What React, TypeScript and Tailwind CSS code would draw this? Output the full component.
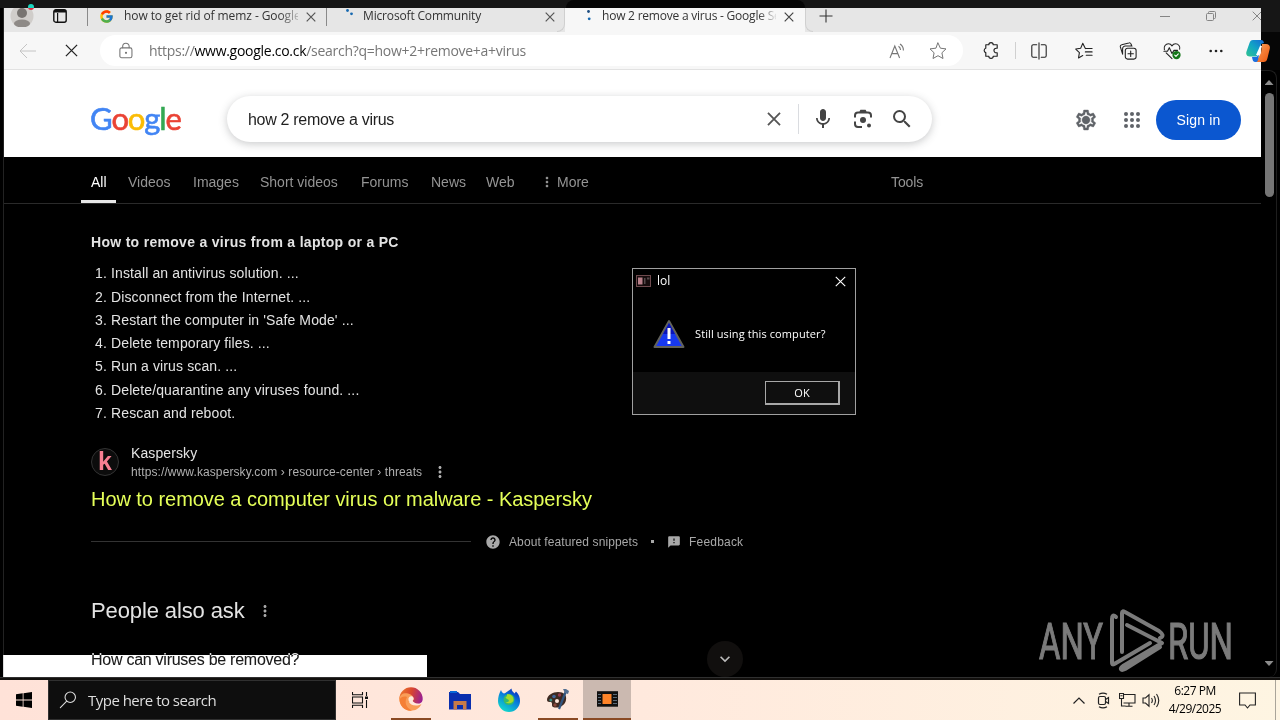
import type { ReactNode } from "react";
import { FcGoogle } from "react-icons/fc";
import { MdMic, MdSearch, MdOutlineSettings, MdHelp, MdFeedback, MdMoreVert, MdExpandMore } from "react-icons/md";

const SEGOE = "font-['Open_Sans','Noto_Sans',sans-serif]";

const NAV = [
  { label: "All", width: "w-[15px]", gap: "mr-[22px]" },
  { label: "Videos", width: "w-[43px]", gap: "mr-[22px]" },
  { label: "Images", width: "w-[45px]", gap: "mr-[22px]" },
  { label: "Short videos", width: "w-[79px]", gap: "mr-[22px]" },
  { label: "Forums", width: "w-[48px]", gap: "mr-[22px]" },
  { label: "News", width: "w-[33px]", gap: "mr-[22px]" },
  { label: "Web", width: "w-[29px]", gap: "mr-[24px]" },
];

const STEPS = [
  "Install an antivirus solution. ...",
  "Disconnect from the Internet. ...",
  "Restart the computer in 'Safe Mode' ...",
  "Delete temporary files. ...",
  "Run a virus scan. ...",
  "Delete/quarantine any viruses found. ...",
  "Rescan and reboot.",
];

function Line({ size = 20, className = "", children }: { size?: number; className?: string; children: ReactNode }) {
  return (
    <svg
      width={size}
      height={size}
      viewBox="0 0 20 20"
      fill="none"
      stroke="currentColor"
      strokeWidth="1.2"
      strokeLinecap="round"
      strokeLinejoin="round"
      className={`shrink-0 ${className}`}
    >
      {children}
    </svg>
  );
}

function Cross({ size = 10, className = "", width = 1.2 }: { size?: number; className?: string; width?: number }) {
  return (
    <svg width={size} height={size} viewBox="0 0 10 10" className={`shrink-0 ${className}`}>
      <path d="M.7.7l8.6 8.6M9.3.7L.7 9.3" stroke="currentColor" strokeWidth={width} />
    </svg>
  );
}

function TabStrip() {
  return (
    <div className={`flex h-6 bg-[#e6e6e6] text-[12px] leading-4 text-[#333] ${SEGOE}`}>
      <div className="relative ml-[6px] h-[19px] w-6 overflow-hidden">
        <svg width="24" height="24" viewBox="0 0 24 24" className="-mt-1">
          <circle cx="12" cy="12" r="11.5" fill="#d0cdca" />
          <circle cx="12" cy="9" r="5" fill="#787471" />
          <ellipse cx="12" cy="19.5" rx="8" ry="4" fill="#8e8a87" />
        </svg>
      </div>
      <svg width="14" height="14" viewBox="0 0 14 14" className="mt-[1px] ml-[19px]">
        <rect x=".8" y=".8" width="12.4" height="12.4" rx="2" fill="none" stroke="#111" strokeWidth="1.4" />
        <path d="M1 1h12v2.600H1zM4 4h1.200v9H4z" fill="#111" />
      </svg>
      <div className="ml-5 h-[18px] w-px bg-[#8a8a8a]" />
      <FcGoogle size={15} className="mt-px ml-[11px]" />
      <div className="ml-[10px] w-[174px] whitespace-nowrap tracking-[-0.08px] [mask-image:linear-gradient(90deg,#000_155px,transparent_180px)]">
        how to get rid of memz - Google
      </div>
      <Cross className="mt-[4px] ml-[8px] text-[#555]" />
      <div className="ml-[10px] h-[18px] w-px bg-[#8a8a8a]" />
      <svg width="12" height="12" viewBox="0 0 12 12" className="ml-[17px]">
        <circle cx="3.5" cy="2.5" r="1.4" fill="#1769b0" />
        <circle cx="7.5" cy="5.8" r="1.4" fill="#1769b0" />
      </svg>
      <div className="ml-[7px] w-[182px] whitespace-nowrap tracking-[-0.16px]">Microsoft Community</div>
      <Cross className="mt-[4px] text-[#555]" />
      <div className="ml-[10px] h-6 w-[240px] bg-[#f7f7f7]">
        <div className="flex h-6">
          <div className="-ml-2 h-6 w-2 rounded-br-lg border-r border-b border-[#d0d0d0] bg-[#e6e6e6]" />
          <svg width="10" height="14" viewBox="0 0 10 14" className="ml-[19px]">
            <circle cx="4.5" cy="3.5" r="1.4" fill="#1d4d80" />
            <circle cx="5.2" cy="10.8" r="1.4" fill="#1769b0" />
          </svg>
          <div className="ml-[8px] w-[174px] whitespace-nowrap tracking-[-0.22px] [mask-image:linear-gradient(90deg,#000_156px,transparent_176px)]">
            how 2 remove a virus - Google Se
          </div>
          <Cross className="mt-[4px] ml-[8px] text-[#444]" />
        </div>
      </div>
      <div className="h-6 w-2 rounded-bl-lg border-b border-l border-[#d0d0d0] bg-[#e6e6e6]" />
      <svg width="14" height="14" viewBox="0 0 14 14" className="mt-px ml-[6px]">
        <path d="M7 .5v13M.5 7h13" stroke="#333" strokeWidth="1.1" />
      </svg>
      <div className="ml-auto flex items-start text-[#858585]">
        <div className="mt-[8px] mr-9 h-px w-[10px] bg-[#858585]" />
        <svg width="10" height="10" viewBox="0 0 10 10" className="mt-[3px]" fill="none" stroke="currentColor">
          <rect x=".5" y="2.5" width="7" height="7" rx="1" />
          <path d="M2.5 2.3V1.5a1 1 0 0 1 1-1h5a1 1 0 0 1 1 1v5a1 1 0 0 1-1 1h-.8" />
        </svg>
        <Cross className="mt-[3px] -mr-px ml-[36px]" width={1} />
      </div>
    </div>
  );
}

function Toolbar() {
  return (
    <div className="flex h-[38px] items-center border-b border-[#e2e2e2] bg-[#f7f7f7] text-[#222]">
      <svg width="18" height="16" viewBox="0 0 18 16" className="ml-[15px]" fill="none" stroke="#c4c4c4">
        <path d="M17 8H1M8 1L1 8l7 7" />
      </svg>
      <Cross size={13} width={1} className="ml-[28px]" />
      <div className={`ml-[22px] flex h-[31px] w-[863px] items-center rounded-full bg-white text-[14px] text-[#767676] ${SEGOE}`}>
        <Line size={18} className="ml-[17px]">
          <rect x="3.2" y="6.5" width="13.4" height="11" rx="2" />
          <path d="M6.300 6.300V5a3.600 3.600 0 0 1 7.200 0v1.300" />
          <circle cx="10" cy="12" r=".6" fill="currentColor" />
        </Line>
        <div className="ml-[14px] w-[600px] whitespace-nowrap tracking-[-0.28px]">
          https://<span className="text-black">www.google.co.ck</span>/search?q=how+2+remove+a+virus
        </div>
        <svg width="18" height="16" viewBox="0 0 18 16" className="ml-auto" fill="none" stroke="currentColor" strokeWidth="1.1">
          <path d="M1 15L5.800 3l4.800 12M2.800 10.600h6M9.500 3.200a4.500 4.500 0 0 1 2 3.800M11 1a7.500 7.500 0 0 1 3.400 6.500" />
        </svg>
        <Line className="mr-[15px] ml-[21px]">
          <path d="M10 2l2.400 5.200 5.600.7-4.100 3.900 1.100 5.700L10 14.700l-5 2.800 1.100-5.700L2 7.900l5.600-.7z" strokeWidth="1" />
        </Line>
      </div>
      <Line size={19} className="ml-[19px]">
        <path d="M4 4h3.200a2.300 2.300 0 0 1 4.600 0H16v3.600h-1a2.400 2.400 0 0 0 0 4.800h1V16h-4.200a2.300 2.300 0 0 1-4.600 0H4v-3.800a2.400 2.400 0 0 1 0-4.600z" />
      </Line>
      <div className="ml-[14px] h-[17px] w-px bg-[#d0d0d0]" />
      <div className="flex">
        <div className="flex w-[45px] justify-center">
          <Line size={18}>
            <path d="M7.500 3H3.600A1.600 1.600 0 0 0 2 4.600v10.800A1.600 1.600 0 0 0 3.600 17h3.900M12.500 3h3.900A1.600 1.600 0 0 1 18 4.600v10.800a1.600 1.600 0 0 1-1.600 1.600h-3.900M10 1v18" />
          </Line>
        </div>
        <div className="flex w-[45px] justify-center">
          <Line size={18}>
            <path d="M11.500 7.300L8.600 1.500 6.300 7 .8 7.800l4.100 4-1 5.900 4.700-2.600M12 7.200h7M11.500 11h7.500M12.500 14.800H19" />
          </Line>
        </div>
        <div className="flex w-[44px] justify-center">
          <Line size={18}>
            <rect x="7" y="7" width="12" height="12" rx="2.500" />
            <path d="M13 10v6M10 13h6M4 13.500L1.500 5.500A2 2 0 0 1 3 3l8-2a2 2 0 0 1 2.500 1.500l.5 2M4 13V7.500A3 3 0 0 1 7 4.500h7.500" />
          </Line>
        </div>
        <div className="flex w-[44px] justify-center">
          <Line size={18}>
            <path d="M1.500 8.500C.5 5 3 2 6 2c2 0 3.200 1 4 2.300C10.800 3 12 2 14 2c3 0 5.500 3 4.500 6M3.500 12L10 18.500M1 10.300h4l2-4 3 6.500 2.200-3.500h4" />
            <circle cx="15" cy="14.500" r="4.600" fill="#15771a" stroke="none" />
            <path d="M13 14.600l1.400 1.300 2.600-2.700" stroke="#fff" />
          </Line>
        </div>
        <div className="flex w-[44px] justify-center">
          <svg width="14" height="18" viewBox="0 0 14 18" fill="#222">
            <circle cx="1.700" cy="9" r="1.300" />
            <circle cx="7" cy="9" r="1.300" />
            <circle cx="12.300" cy="9" r="1.300" />
          </svg>
        </div>
      </div>
    </div>
  );
}

function SearchHeader() {
  return (
    <div className="flex h-[87px] items-start bg-white">
      <div className="mt-[29px] ml-[86px] w-[91px] font-['Lato',sans-serif] text-[31px] leading-[38px] tracking-[-1.1px] whitespace-nowrap [-webkit-text-stroke:0.6px_currentColor]">
        <span className="text-[#4285f4]">G</span>
        <span className="text-[#ea4335]">o</span>
        <span className="text-[#fbbc05]">o</span>
        <span className="text-[#4285f4]">g</span>
        <span className="text-[#34a853]">l</span>
        <span className="text-[#ea4335]">e</span>
      </div>
      <div className="mt-[26px] ml-[46px] flex h-[46px] w-[705px] items-center rounded-full bg-white text-[#444] shadow-[0_2px_8px_rgba(60,64,67,0.28)]">
        <div className="mt-[2px] ml-[21px] w-[518px] text-[16px] tracking-[-0.3px] text-[#1f1f1f]">how 2 remove a virus</div>
        <Cross size={14} width={1.3} className="ml-px text-[#555]" />
        <div className="ml-[17px] h-[30px] w-px bg-[#dadce0]" />
        <MdMic size={24} className="ml-[12px]" />
        <svg width="20" height="20" viewBox="0 0 20 20" className="ml-[18px]" fill="none" stroke="#444" strokeWidth="2">
          <path d="M2 8.500V6.500a3 3 0 0 1 3-3h10a3 3 0 0 1 3 3v2M2 12.500v2.500a3 3 0 0 0 3 3h4M7 3.500l1-1.700h4l1 1.700" />
          <circle cx="10" cy="11" r="3" fill="#444" stroke="none" />
          <circle cx="16" cy="16.500" r="2" fill="#444" stroke="none" />
        </svg>
        <MdSearch size={24} className="ml-[17px]" />
      </div>
      <div className="relative mt-[38px] ml-[142px] h-6 w-6 text-[#5f6368]">
        <MdOutlineSettings size={24} className="[&>path:last-child]:stroke-current [&>path:last-child]:stroke-[0.4px]" />
        <div className="absolute top-[9px] left-[9px] h-[6px] w-[6px] rounded-full bg-[#5f6368]" />
      </div>
      <svg width="24" height="24" viewBox="0 0 24 24" fill="#5f6368" className="mt-[38px] ml-[22px]">
        {[6, 12, 18].map((y) => [6, 12, 18].map((x) => <circle key={`${x}-${y}`} cx={x} cy={y} r="2" />))}
      </svg>
      <button className="mt-[30px] ml-[12px] h-10 w-[85px] rounded-full bg-[#0b57d0] text-[14px] tracking-[0.2px] text-white">Sign in</button>
    </div>
  );
}

function Results() {
  return (
    <div className="flex flex-col text-[#e3e3e3]">
      <div className="flex h-[47px] items-start border-b border-[#2a2a2a] pt-4 pl-[87px] text-[14px] leading-[18px] text-[#949494]">
        {NAV.map((item, i) => (
          <div key={item.label} className={`relative whitespace-nowrap ${item.width} ${item.gap} ${i === 0 ? "text-white" : ""}`}>
            {item.label}
            {i === 0 && <div className="absolute top-[27px] -left-[10px] h-[3px] w-[35px] bg-[#e8e8e8]" />}
          </div>
        ))}
        <MdMoreVert size={16} className="mt-px" />
        <div className="ml-[2px] w-[334px]">More</div>
        <div className="tracking-[-0.1px]">Tools</div>
      </div>

      <div className="flex flex-col pl-[87px]">
        <h2 className="mt-[29px] text-[14px] leading-[18px] font-bold tracking-[0.3px]">How to remove a virus from a laptop or a PC</h2>
        <ol className="mt-[11.3px] text-[14px] leading-[23.3px] tracking-[0.12px]">
          {STEPS.map((step, i) => (
            <li key={step} className="flex">
              <span className="ml-[4px] w-4">{i + 1}.</span>
              {step}
            </li>
          ))}
        </ol>

        <div className="mt-[18.6px] flex">
          <div className="mt-[4px] flex h-7 w-7 items-center justify-center rounded-full border border-[#333] bg-[#0c0c0c] text-[25px] leading-none font-bold text-[#f77f92]">
            k
          </div>
          <div className="ml-3">
            <div className="text-[14px] leading-[18px] tracking-[0.1px]">Kaspersky</div>
            <div className="mt-px flex h-[18px] items-center text-[12px] text-[#b0b0b0]">
              <span className="w-[292px] whitespace-nowrap tracking-[0.1px]">https://www.kaspersky.com › resource-center › threats</span>
              <MdMoreVert size={18} className="ml-[8px]" />
            </div>
          </div>
        </div>
        <h3 className="mt-[5px] text-[20px] leading-[26px] tracking-[-0.05px] text-[#e5ff58]">How to remove a computer virus or malware - Kaspersky</h3>

        <div className="mt-[21px] flex h-[18px] items-center text-[12px] text-[#a8a8a8]">
          <div className="h-px w-[380px] bg-[#333]" />
          <MdHelp size={16} className="ml-[14px]" />
          <span className="ml-[8px] w-[130px] whitespace-nowrap tracking-[0.1px]">About featured snippets</span>
          <span className="ml-[12px] h-[3px] w-[3px] bg-[#a8a8a8]" />
          <MdFeedback size={14} className="ml-[13px]" />
          <span className="ml-[8px] tracking-[0.2px]">Feedback</span>
        </div>

        <div className="mt-[46px] flex items-center">
          <h2 className="text-[22px] leading-[28px] tracking-[-0.12px]">People also ask</h2>
          <MdMoreVert size={18} className="ml-[11px] text-[#a8a8a8]" />
        </div>
        <div className="mt-[16px] flex h-9 w-[652px] items-center">
          <span className="mt-[2px] text-[16px] tracking-[-0.26px]">How can viruses be removed?</span>
          <div className="ml-auto flex h-9 w-9 items-center justify-center rounded-full bg-[#110f0e]">
            <MdExpandMore size={20} className="text-[#bbb]" />
          </div>
        </div>
      </div>
    </div>
  );
}

function Dialog() {
  return (
    <div className={`absolute top-[268px] left-[632px] flex h-[147px] w-[224px] flex-col border border-[#a0a0a0] bg-black text-white ${SEGOE}`}>
      <div className="flex h-6 items-center text-[12px]">
        <svg width="15" height="12" viewBox="0 0 15 12" className="ml-[3px]">
          <rect x=".5" y=".5" width="14" height="11" fill="#160c0d" stroke="#6e4a4e" />
          <path d="M2 2.500h4.500v7H2z" fill="#b8808a" />
          <path d="M8 3h1.500v6H8zM11 2.500h2.500v2H11z" fill="#54484a" />
        </svg>
        <span className="ml-[6px]">lol</span>
        <Cross size={11} width={1} className="mr-[9px] ml-auto" />
      </div>
      <div className="flex h-[79px] items-center">
        <svg width="32" height="30" viewBox="0 0 32 30" className="mt-[3px] ml-[20px]">
          <path d="M16 2L30.500 28h-29z" fill="#1738f0" stroke="#62625c" strokeWidth="2" strokeLinejoin="round" />
          <path d="M16 4l6 11-12 0z" fill="#0a14b8" />
          <path d="M14.500 9h3v11h-3zM14.500 22h3v3h-3z" fill="#fff" />
        </svg>
        <span className="mt-[4px] ml-[10px] text-[11px] tracking-[0.1px] whitespace-nowrap">Still using this computer?</span>
      </div>
      <div className="flex flex-1 items-center justify-end bg-[#0f0f0f] pr-[15px]">
        <button className="h-6 w-[75px] border border-r-2 border-b-2 border-[#a8a8a8] bg-[#0f0f0f] text-[11px] leading-none">OK</button>
      </div>
    </div>
  );
}

function Watermark() {
  return (
    <svg width="240" height="72" viewBox="0 0 240 72" className="absolute top-[605px] left-[1037px]">
      <g fill="#7b7b7b" stroke="#7b7b7b" strokeWidth="1.2" fontFamily="Roboto, sans-serif" fontSize="50">
        <text x="2" y="54" textLength="64" lengthAdjust="spacingAndGlyphs">ANY</text>
        <text x="131" y="54" textLength="65" lengthAdjust="spacingAndGlyphs">RUN</text>
      </g>
      <g fill="none" stroke="#7b7b7b" strokeWidth="4" strokeLinecap="round" strokeLinejoin="round">
        <path d="M79 12c-3-3-4-1-4 2v43c0 3 1 3 4 1l34-20" />
        <path d="M85 47V8c0-2 1-2 3-1l34 19c4 3 5 5 1 7" />
        <path d="M90 20l35 18-39 23c-4 3-2 5 2 3l35-22" />
      </g>
    </svg>
  );
}

function Taskbar() {
  return (
    <div className={`flex h-10 bg-[linear-gradient(90deg,#ffe2d8,#ffe9dd_50%,#fef5e2)] text-black ${SEGOE}`}>
      <div className="flex w-12 items-center justify-center">
        <svg width="16" height="16" viewBox="0 0 16 16">
          <path d="M0 2.300L6.700 1.300v6.200H0zM7.500 1.200L16 0v7.500H7.500zM0 8.400h6.700v6.300L0 13.700zM7.500 8.400H16V16l-8.500-1.200z" />
        </svg>
      </div>
      <div className="flex w-72 items-center border border-[#303030] bg-[#0e0e0e] text-[15px] text-[#dedede]">
        <Line size={18} className="ml-[10px]">
          <circle cx="12.500" cy="7" r="5.800" />
          <path d="M8.300 11.500L1.500 18.500" />
        </Line>
        <span className="ml-[11px] whitespace-nowrap tracking-[-0.52px]">Type here to search</span>
      </div>
      <div className="flex w-[55px] items-center pl-[16px]">
        <svg width="17" height="16" viewBox="0 0 17 16" fill="none" stroke="#111" strokeWidth="1.1">
          <path d="M.5 0v2.800h10V0M.5 16v-2.800h10V16M.5 5h10v6H.5zM14.500 0v4M14.500 8v8" />
          <path d="M13 4.500h3v2.500h-3z" fill="#111" stroke="none" />
        </svg>
      </div>

      <div className="flex h-10 w-10 items-center justify-center border-b-2 border-[#8a4a24]">
        <svg width="24" height="24" viewBox="0 0 24 24">
          <defs>
            <linearGradient id="swirl" x1="0" y1=".3" x2="1" y2=".5">
              <stop offset="0" stopColor="#ee7a2c" />
              <stop offset=".5" stopColor="#d8452f" />
              <stop offset="1" stopColor="#9b2191" />
            </linearGradient>
          </defs>
          <path d="M.3 12A11.700 11.700 0 0 1 23.700 12c0 4-3.500 5.500-7 4.500l-4-3z" fill="url(#swirl)" />
          <path d="M.3 12C1 7.500 4.500 5.500 9 6.500c4 1 6 3.500 5.500 6.500L10 15c1 3 7 5 12.500 2C20 22 16 23.700 12 23.700A11.700 11.700 0 0 1 .3 12z" fill="#f99d58" />
          <path d="M8 10c-3 5-1 11 5 13.500-7 1-12-4-12.500-11C2 10 5 9 8 10z" fill="#f57f35" />
          <path d="M13.500 9.500c-3-.7-4.500 1.500-4 3.500.8 3.500 7 5.500 12.500 3.500-4 .7-8-.3-8.300-2-.3-1 1-1.500 1-2.700 0-1-.4-1.900-1.200-2.300z" fill="#ffe8da" />
        </svg>
      </div>
      <div className="ml-[9px] flex h-10 w-10 items-center justify-center">
        <svg width="22" height="19" viewBox="0 0 22 19">
          <path d="M0 1h9l2 2h11v15.500H0z" fill="#0a2fae" />
          <path d="M1 0h7v2H1z" fill="#0868d8" />
          <path d="M4.500 18.500V10h13v8.500h-3.500V14H8v4.500z" fill="#c77b48" />
        </svg>
      </div>
      <div className="ml-[9px] flex h-10 w-10 items-center justify-center">
        <svg width="24" height="24" viewBox="0 0 24 24">
          <defs>
            <linearGradient id="flame" x1=".8" y1="0" x2=".2" y2="1">
              <stop offset="0" stopColor="#0a28b8" />
              <stop offset=".4" stopColor="#0879dc" />
              <stop offset="1" stopColor="#13e2c8" />
            </linearGradient>
          </defs>
          <path d="M4 2c.5 2 1.500 3 3 3.500C9 5 11 3 14.500.5c0 2.500 2 3.500 3 5l1.500-2c3 3 4 6 4 9.500a11 11 0 0 1-22 0C1 9 2 6 4 2z" fill="url(#flame)" />
          <circle cx="12" cy="11.500" r="5.500" fill="#35b96a" />
          <path d="M10 6c3 0 6.500 2 6.500 6 0 3-5 4.500-8 2 3 .5 4-1 3-2.200-1-1-2.500-.8-3-2.300 1-1 2-1.500 1.500-3.500z" fill="#a4db2c" />
        </svg>
      </div>
      <div className="ml-[9px] flex h-10 w-10 items-center justify-center border-b-2 border-[#8a4a24]">
        <svg width="24" height="24" viewBox="0 0 24 24">
          <path d="M12 5c6 0 9 3 8 8-1 6-8 9-13 7-2-1 0-4-2-5-2 0-4 0-4-2 0-5 6-8 11-8z" fill="#3e2a22" />
          <circle cx="8" cy="9.500" r="1.800" fill="#40679b" />
          <circle cx="4.800" cy="13" r="1.500" fill="#3b8f86" />
          <circle cx="13.500" cy="8" r="1.700" fill="#933b4c" />
          <circle cx="11" cy="14" r="2" fill="#ffe8dc" />
          <circle cx="9" cy="18" r="1.700" fill="#87473b" />
          <path d="M20 4L13 22" stroke="#31557f" strokeWidth="2.200" />
          <path d="M17 2l3 0 3 2-1 3-3-1z" fill="#536f91" />
        </svg>
      </div>
      <div className="ml-[5px] flex h-10 w-12 items-center justify-center border-b-2 border-[#8a4a24] bg-[#cbb9b0]">
        <svg width="21" height="16" viewBox="0 0 21 16">
          <rect width="21" height="15.500" y=".2" fill="#111" />
          <rect x="5.500" y="3" width="9" height="10" fill="#ff8429" />
          <path d="M1 3.500h3M1 6.500h3M1 9.500h3M1 12.500h3M16 3.500h4M16 6.500h4M16 9.500h4M16 12.500h4" stroke="#5a6a78" />
        </svg>
      </div>

      <div className="ml-auto flex items-center">
        <svg width="12" height="7" viewBox="0 0 12 7" fill="none" stroke="#222" strokeWidth="1.2">
          <path d="M.5 6.500L6 1l5.500 5.500" />
        </svg>
        <svg width="13" height="17" viewBox="0 0 13 17" fill="none" stroke="#222" strokeWidth="1.2" className="ml-[12px]">
          <rect x="1.500" y="4.500" width="7" height="8" rx="1.500" />
          <path d="M8.500 7.500l3-2v6l-3-2M2 2.300q4-2.300 8 0M2 14.800q4 2.300 8 0" />
        </svg>
        <svg width="17" height="14" viewBox="0 0 17 14" fill="none" stroke="#222" strokeWidth="1.1" className="ml-[9px]">
          <path d="M5 1.500h11v8.500H4.500M10 10v3M6.500 13.300h7M2.500 6v7h4M.5.500h4V5.500h-4zM1.500 2.800h2" />
        </svg>
        <svg width="18" height="15" viewBox="0 0 18 15" fill="none" stroke="#222" strokeWidth="1.1" className="ml-[6px]">
          <path d="M1 5h2.500L7 1.800v11.400L3.500 10H1zM9.500 5q1.700 2.500 0 5M12 3q3 4.500 0 9M14.500 1q4.500 6.500 0 13" />
        </svg>
        <div className="ml-[7px] w-[56px] text-center text-[12px] leading-[18px] tracking-[-0.5px] whitespace-nowrap">
          6:27 PM
          <br />
          4/29/2025
        </div>
        <svg width="17" height="17" viewBox="0 0 17 17" fill="none" stroke="#222" strokeWidth="1.1" className="ml-[16px]">
          <path d="M.6 1h15.800v12H11l-2.500 3L6 13H.6z" />
        </svg>
        <div className="mr-[4px] ml-[19px] h-10 w-px bg-[#aaa59a]" />
      </div>
    </div>
  );
}

export default function App() {
  return (
    <div className="relative flex h-[720px] w-[1280px] flex-col overflow-hidden bg-black font-['Liberation_Sans',Arial,sans-serif]">
      <div className="flex h-2 bg-[#161616]">
        <div className="ml-[566px] h-2 w-[239px] rounded-t-lg bg-[#060606]" />
      </div>
      <div className="flex h-[669px]">
        <div className="w-1 border-r border-[#222]" />
        <div className="flex w-[1257px] flex-col overflow-hidden">
          <TabStrip />
          <Toolbar />
          <SearchHeader />
          <Results />
        </div>
        <div className="flex w-[19px] flex-col">
          <div className="h-6 bg-[#161616]" />
          <div className="h-[38px] bg-[#060606]" />
          <div className="mr-[3px] flex flex-1 flex-col items-center rounded-r-lg border-t border-r border-[#1e1e1e] pl-px">
            <div className="mt-[9px] h-[5px] w-[9px] bg-[#8c8c8c] [clip-path:polygon(50%_0,100%_100%,0_100%)]" />
            <div className="mt-[8px] h-[104px] w-[9px] rounded-full bg-[#757575]" />
            <div className="mt-auto mb-[11px] h-[5px] w-[9px] bg-[#8c8c8c] [clip-path:polygon(0_0,100%_0,50%_100%)]" />
          </div>
        </div>
      </div>
      <div className="h-[3px] border-t border-[#303030] bg-[#12100e]" />
      <Taskbar />

      {/* inverted patch over the bottom of the page */}
      <div className="absolute top-[655px] left-[3px] h-[22px] w-[424px] bg-white mix-blend-difference" />

      {/* profile badge */}
      <div className="absolute top-[4px] left-[28px] h-[6px] w-[6px] rounded-full bg-[linear-gradient(#19d6c0_60%,#e0263c_60%)]" />

      {/* copilot, hangs over the window edge */}
      <svg width="24" height="23" viewBox="0 0 24 23" className="absolute top-[40px] left-[1246px]">
        <defs>
          <linearGradient id="cpBlue" x1="0" y1="1" x2="1" y2="0">
            <stop offset="0" stopColor="#31c48f" />
            <stop offset=".5" stopColor="#12a5c4" />
            <stop offset="1" stopColor="#1768d8" />
          </linearGradient>
          <linearGradient id="cpOrange" x1="0" y1="0" x2="1" y2="1">
            <stop offset="0" stopColor="#f7a25f" />
            <stop offset="1" stopColor="#f0570c" />
          </linearGradient>
        </defs>
        <path d="M7 0h8c2 0 2.500 1 3 3l-3 1-3 10c-.7 2-1.500 2.500-3 2.500H4c-3 0-4.500-2-3.500-5L3.500 3C4.200 1 5 0 7 0z" fill="url(#cpBlue)" />
        <path d="M16 4h4c3 0 4.500 2 3.700 5l-2.200 9c-.7 3-2 4-4 4H10l5-9z" fill="url(#cpOrange)" />
        <path d="M6 17h4l3-2-1 5c-.5 1.500-1 2-2.500 2C7 22 6.500 20 6 17z" fill="#1a6fe0" />
        <path d="M14 6h2l-3 9h-3z" fill="#fff" />
      </svg>

      <Watermark />
      <Dialog />
    </div>
  );
}
